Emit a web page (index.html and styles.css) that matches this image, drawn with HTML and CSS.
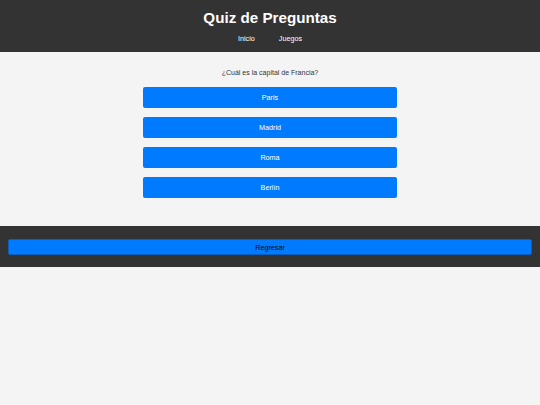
FILE: index.html
```html
<!DOCTYPE html>
<html lang="es">
<head>
<meta charset="utf-8">
<title>Quiz de Preguntas</title>
<link rel="stylesheet" href="styles.css">
</head>
<body>
<header class="site-header">
  <h1 class="title">Quiz de Preguntas</h1>
  <nav class="nav">
    <a class="nav-link" href="#">Inicio</a>
    <a class="nav-link" href="#">Juegos</a>
  </nav>
</header>
<main class="quiz">
  <p class="question">¿Cuál es la capital de Francia?</p>
  <div class="options">
    <button class="option">Paris</button>
    <button class="option">Madrid</button>
    <button class="option">Roma</button>
    <button class="option">Berlín</button>
  </div>
</main>
<footer class="site-footer">
  <button class="back">Regresar</button>
</footer>
</body>
</html>
```
FILE: styles.css
```css
html, body {
  margin: 0;
  padding: 0;
}
body {
  background: #f4f4f4;
  font-family: "Liberation Sans", Arial, sans-serif;
  font-size: 7.2px;
  color: #333;
}
.site-header {
  background: #333333;
  color: #fff;
  text-align: center;
  padding: 9px 0 9px;
}
.title {
  margin: 0;
  font-size: 15.2px;
  font-weight: bold;
  line-height: 17px;
}
.nav {
  margin-top: 8.5px;
  display: flex;
  justify-content: center;
  gap: 24px;
  line-height: 8.5px;
}
.nav-link {
  color: #fff;
  text-decoration: none;
  font-size: 7.2px;
}
.quiz {
  padding: 16px 0 28px;
  display: flex;
  flex-direction: column;
  align-items: center;
}
.question {
  margin: 0 0 10px;
  line-height: 9px;
  font-size: 7px;
}
.options {
  display: flex;
  flex-direction: column;
  gap: 9px;
  width: 254px;
}
.option {
  height: 21px;
  border: none;
  border-radius: 2px;
  background: #007bff;
  color: #fff;
  font-family: "Liberation Sans", Arial, sans-serif;
  font-size: 7.2px;
  padding: 0;
}
.site-footer {
  background: #333333;
  padding: 13px 8px 12px;
}
.back {
  display: block;
  width: 100%;
  height: 16px;
  background: #007bff;
  border: 1px solid #0a5ec0;
  border-radius: 2px;
  color: #000;
  font-family: "Liberation Sans", Arial, sans-serif;
  font-size: 7.2px;
  padding: 0;
}
```
